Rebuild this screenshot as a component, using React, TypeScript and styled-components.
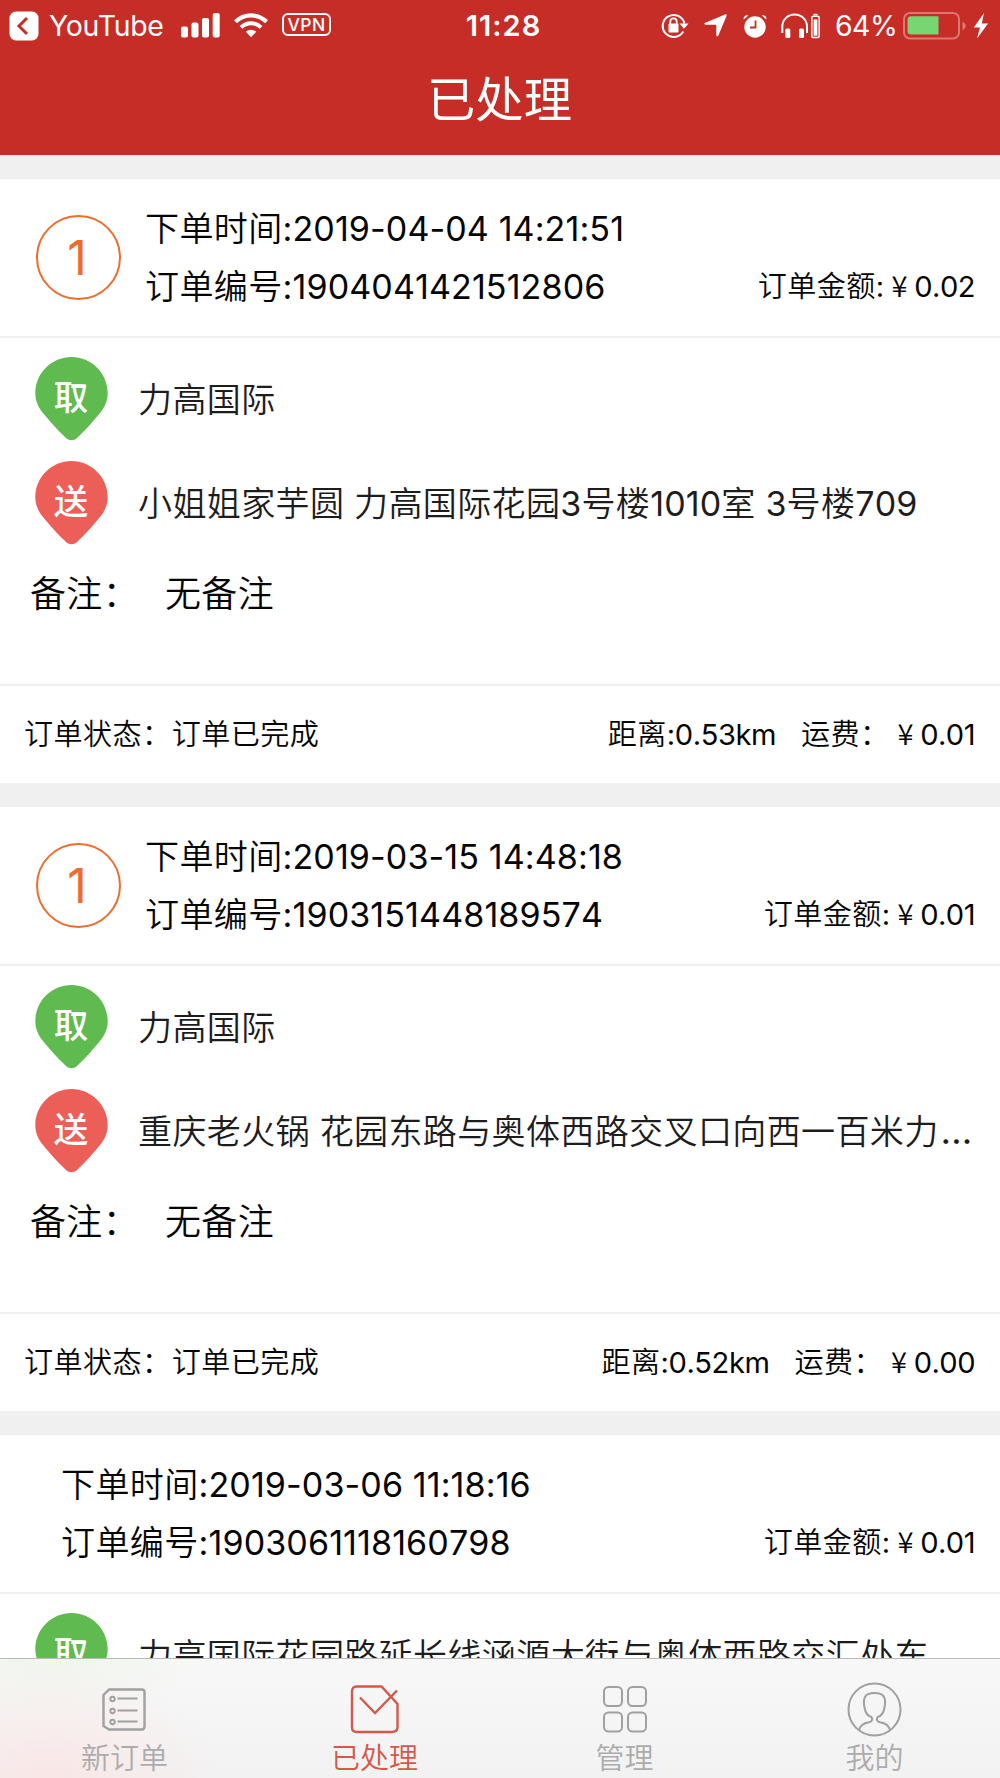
import React from 'react';
import styled, { createGlobalStyle, css } from 'styled-components';

const GlobalStyle = createGlobalStyle`
  * { box-sizing: border-box; }
  body {
    margin: 0;
    background: #fff;
    font-family: Inter, "Noto Sans CJK SC", sans-serif;
    font-weight: 400;
    font-kerning: none;
    -webkit-font-smoothing: antialiased;
  }
`;

const Screen = styled.div`
  display: flex;
  flex-direction: column;
  width: 1000px;
  height: 1778px;
  overflow: hidden;
  background: #f0f0f0;
  color: #050505;
`;

const Header = styled.header`
  flex: none;
  height: 155px;
  background: #c72d27;
  color: #fff;
`;

const StatusBar = styled.div`
  display: grid;
  grid-template-columns: 1fr auto 1fr;
  align-items: center;
  height: 50px;
  padding: 0 11px 0 9px;
  font-size: 28.4px;
`;

const StatusSide = styled.div<{ $end?: boolean }>`
  display: flex;
  align-items: center;
  justify-content: ${(p) => (p.$end ? 'flex-end' : 'flex-start')};
`;

const StatusText = styled.span<{ $width: number; $ml: number; $track: number }>`
  width: ${(p) => p.$width}px;
  margin-left: ${(p) => p.$ml}px;
  letter-spacing: ${(p) => p.$track}px;
  font-kerning: normal;
  line-height: 51px;
  white-space: nowrap;
`;

const Clock = styled.span`
  padding-left: 9px;
  font-size: 29px;
  font-weight: 600;
  letter-spacing: 1px;
  line-height: 51px;
`;

const Glyph = styled.svg<{ $ml?: number }>`
  display: block;
  flex: none;
  margin-left: ${(p) => p.$ml ?? 0}px;
`;

const VpnTag = styled.span`
  display: flex;
  align-items: center;
  justify-content: center;
  width: 49px;
  height: 23px;
  margin: -2px 0 0 14px;
  border: 2px solid #fff;
  border-radius: 6px;
  font-size: 17.5px;
  font-weight: 500;
  letter-spacing: 0.4px;
`;

const Title = styled.h1`
  margin: 0;
  padding-right: 1px;
  height: 96px;
  line-height: 99px;
  text-align: center;
  font-size: 48.3px;
  font-weight: 400;
`;

const List = styled.main`
  flex: 1;
  min-height: 0;
  overflow: hidden;
  padding-top: 24px;
`;

const Card = styled.article`
  height: 604px;
  margin-bottom: 24px;
  background: #fff;
`;

const CardHead = styled.div<{ $indent: number }>`
  display: flex;
  align-items: center;
  height: 159px;
  padding: 0 25px 0 ${(p) => p.$indent}px;
  border-bottom: 2px solid #f0f0f0;
`;

const Count = styled.div`
  display: flex;
  align-items: center;
  justify-content: center;
  flex: none;
  width: 85px;
  height: 85px;
  margin-right: 24px;
  padding-right: 3px;
  border: 2px solid #ec6d2d;
  border-radius: 50%;
  color: #ec6d2d;
  font-size: 48px;
`;

const HeadLines = styled.div`
  flex: 1;
  font-size: 34.05px;
  line-height: 58px;
`;

const HeadLine = styled.div`
  display: flex;
  justify-content: space-between;
  height: 58px;
  white-space: nowrap;
`;

const Small = styled.span`
  font-size: 29.1px;
  white-space: pre;
`;

const Latin = styled.span<{ $track: number }>`
  font-weight: 400;
  letter-spacing: ${(p) => p.$track}em;
`;

const Han = styled.span`
  font-weight: 350;
  letter-spacing: 0.01em;

  ${Small} & {
    letter-spacing: 0.015em;
  }
`;

const Yen = styled.span`
  display: inline-block;
  width: 1.05em;
  padding-left: 0.04em;
  text-align: center;
  font-family: "Noto Sans CJK SC", sans-serif;
  font-weight: 350;
  line-height: 1;
`;

const CardBody = styled.div`
  height: 346px;
  padding: 20px 26px 0 30px;
`;

const Stop = styled.div`
  display: flex;
  height: 104px;
  padding-left: 5px;
`;

const StopText = styled.div`
  flex: 1;
  min-width: 0;
  margin-left: 30px;
  font-size: 34.05px;
  line-height: 84px;
  height: 84px;
  color: #1d1d1d;
  white-space: nowrap;
  overflow: hidden;
`;

const Ellipsis = styled.span`
  margin-left: 2px;
  font-size: 1.08em;
  line-height: 1;
`;

const Remark = styled.div`
  display: flex;
  font-size: 36px;
  line-height: 56px;
`;

const RemarkLabel = styled.span`
  width: 135px;
`;

const CardFoot = styled.div`
  display: flex;
  align-items: center;
  height: 99px;
  padding: 0 25px 5px 24px;
  border-top: 2px solid #f0f0f0;
`;

const FootStatus = styled(Small)`
  flex: 1;
`;

const FootFee = styled(Small)`
  margin-left: 25px;
`;

const TabBar = styled.nav`
  flex: none;
  display: grid;
  grid-template-columns: repeat(4, 1fr);
  height: 120px;
  border-top: 1px solid #b9b9b9;
  background:
    radial-gradient(ellipse 170px 110px at 50px 118px, rgba(255, 222, 222, 0.6), rgba(250, 235, 235, 0)),
    radial-gradient(ellipse 160px 60px at 50px 0, rgba(236, 243, 230, 0.6), rgba(240, 244, 238, 0)),
    linear-gradient(#f8f8f8, #f2f2f2);
`;

const tabOn = css`
  color: #d4594c;
`;

const Tab = styled.div<{ $active?: boolean }>`
  display: flex;
  flex-direction: column;
  align-items: center;
  padding-top: 21px;
  color: #a0a0a0;
  ${(p) => p.$active && tabOn}
`;

const TabLabel = styled.span<{ $active?: boolean }>`
  margin-top: 1px;
  padding-right: 1px;
  font-size: 29px;
  font-weight: 350;
  line-height: 40px;
  color: ${(p) => (p.$active ? '#d4594c' : '#acacac')};
`;

const PinSvg = styled.svg`
  display: block;
  flex: none;
  width: 73px;
  height: 84px;
  margin-top: -1px;
`;

const PinText = styled.text`
  font-family: "Noto Sans CJK SC", sans-serif;
  font-size: 34.5px;
  font-weight: 500;
  fill: #fff;
`;

function Mixed({ text, track = 0 }: { text: string; track?: number }) {
  const runs = text.match(/[\x20-\x7e]+|¥|…|[^\x20-\x7e¥…]+/g) ?? [];
  return (
    <>
      {runs.map((run, i) => {
        if (run === '¥') return <Yen key={i}>{run}</Yen>;
        if (run === '…') return <Ellipsis key={i}>{run}</Ellipsis>;
        return /^[\x20-\x7e]/.test(run)
          ? <Latin key={i} $track={track}>{run}</Latin>
          : <Han key={i}>{run}</Han>;
      })}
    </>
  );
}

function Pin({ color, label }: { color: string; label: string }) {
  return (
    <PinSvg viewBox="0 0 73 84">
      <path
        fill={color}
        d="M36.5 0C56.5 0 72.700 16.200 72.700 36.500C72.700 44 69.500 50.500 65 56C58.500 64 51 72.500 43 80C39 84.300 34 84.300 30 80C22 72.500 14.500 64 8 56C3.500 50.500 .3 44 .3 36.500C.3 16.200 16.500 0 36.500 0Z"
      />
      <PinText x="36" y="52.500" textAnchor="middle">{label}</PinText>
    </PinSvg>
  );
}

interface Order {
  count?: number;
  time: string;
  no: string;
  amount: string;
  from: string;
  delivery?: { to: string; distance: string; fee: string };
}

const orders: Order[] = [
  {
    count: 1,
    time: '2019-04-04 14:21:51',
    no: '1904041421512806',
    amount: '0.02',
    from: '力高国际',
    delivery: {
      to: '小姐姐家芋圆 力高国际花园3号楼1010室 3号楼709',
      distance: '0.53km',
      fee: '0.01',
    },
  },
  {
    count: 1,
    time: '2019-03-15 14:48:18',
    no: '1903151448189574',
    amount: '0.01',
    from: '力高国际',
    delivery: {
      to: '重庆老火锅 花园东路与奥体西路交叉口向西一百米力…',
      distance: '0.52km',
      fee: '0.00',
    },
  },
  {
    time: '2019-03-06 11:18:16',
    no: '1903061118160798',
    amount: '0.01',
    from: '力高国际花园路延长线涵源大街与奥体西路交汇处东',
  },
];

function OrderCard({ order }: { order: Order }) {
  const { delivery } = order;
  return (
    <Card>
      <CardHead $indent={order.count ? 36 : 61}>
        {order.count && <Count>{order.count}</Count>}
        <HeadLines>
          <HeadLine>
            <span><Mixed text={`下单时间:${order.time}`} track={0.003} /></span>
          </HeadLine>
          <HeadLine>
            <span><Mixed text={`订单编号:${order.no}`} track={0.003} /></span>
            <Small><Mixed text={`订单金额:¥${order.amount}`} track={-0.018} /></Small>
          </HeadLine>
        </HeadLines>
      </CardHead>
      <CardBody>
        <Stop>
          <Pin color="#5fba50" label="取" />
          <StopText><Mixed text={order.from} /></StopText>
        </Stop>
        {delivery && (
          <>
            <Stop>
              <Pin color="#eb5f58" label="送" />
              <StopText><Mixed text={delivery.to} track={0.003} /></StopText>
            </Stop>
            <Remark>
              <RemarkLabel><Mixed text="备注：" /></RemarkLabel>
              <Mixed text="无备注" />
            </Remark>
          </>
        )}
      </CardBody>
      {delivery && (
        <CardFoot>
          <FootStatus><Mixed text="订单状态：订单已完成" /></FootStatus>
          <Small><Mixed text={`距离:${delivery.distance}`} track={-0.015} /></Small>
          <FootFee><Mixed text={`运费：¥${delivery.fee}`} track={-0.018} /></FootFee>
        </CardFoot>
      )}
    </Card>
  );
}

function StatusIcons() {
  return (
    <>
      <Glyph width="28" height="26" viewBox="0 0 28 26" fill="none">
        <path d="M22.200 18.500A11 11 0 1 1 23.400 10.500" stroke="#fff" strokeWidth="2" />
        <path d="M18.500 10.500H27.500L23 15.800Z" fill="#fff" />
        <rect x="7.500" y="10.500" width="10" height="9" rx="1" fill="#fff" />
        <path d="M9.300 11V8.500a3.200 3.200 0 0 1 6.400 0V11" stroke="#fff" strokeWidth="1.800" />
      </Glyph>
      <Glyph $ml={15} width="23" height="23" viewBox="0 0 23 23" fill="#fff">
        <path d="M21 .5C22.300 0 23 .8 22.500 2L14.400 21.400C13.900 22.700 12.400 22.700 12.300 21.200V11.600C12.300 11 12 10.700 11.400 10.700H1.500C0 10.600 0 9.200 1.300 8.800Z" />
      </Glyph>
      <Glyph $ml={16} width="24" height="24" viewBox="0 0 24 24" fill="#fff">
        <circle cx="12" cy="13" r="10.700" />
        <path d="M.8 5.500C-.3 2.500 3 .2 5.300 1.500ZM23.200 5.500C24.300 2.500 21 .2 18.700 1.500Z" />
        <path d="M12.500 6.500V13.500H7" fill="none" stroke="#c72d27" strokeWidth="1.800" />
      </Glyph>
      <Glyph $ml={14} width="40" height="26" viewBox="0 0 40 26" fill="none">
        <path d="M1.300 20V13.500C1.300 6.500 7 1.500 13.600 1.500S26 6.500 26 13.500V20" stroke="#fff" strokeWidth="2" />
        <rect x="4.300" y="15.500" width="5" height="9.500" rx="1.500" fill="#fff" />
        <rect x="18" y="15.500" width="5" height="9.500" rx="1.500" fill="#fff" />
        <rect x="30.800" y="3.200" width="7.400" height="21.300" rx="1.500" stroke="#fff" strokeWidth="1.500" />
        <rect x="32.600" y="6.500" width="3.800" height="16.200" fill="#fff" />
        <rect x="32.500" y=".8" width="4" height="1.500" fill="#fff" />
      </Glyph>
    </>
  );
}

export default function App() {
  return (
    <>
      <GlobalStyle />
      <Screen>
        <Header>
          <StatusBar>
            <StatusSide>
              <Glyph width="30" height="30" viewBox="0 0 30 30">
                <rect x=".5" y=".5" width="29" height="29" rx="6.500" fill="#fff" />
                <path d="M18 7L10 15L18 23" fill="none" stroke="#c72d27" strokeWidth="3" />
              </Glyph>
              <StatusText $width={115} $ml={10} $track={-0.25}>YouTube</StatusText>
              <Glyph $ml={17} width="39" height="25" viewBox="0 0 39 25" fill="#fff">
                <rect x="0" y="13.500" width="7" height="11" rx="2" />
                <rect x="10.500" y="9.500" width="7" height="15" rx="2" />
                <rect x="21" y="5" width="7" height="19.500" rx="2" />
                <rect x="31.700" y="0" width="7" height="24.500" rx="2" />
              </Glyph>
              <Glyph $ml={14} width="34" height="25" viewBox="0 0 34 25" fill="none">
                <path d="M1.500 8.800A22 22 0 0 1 32.500 8.800" stroke="#fff" strokeWidth="4.200" />
                <path d="M7 14.300A14.200 14.200 0 0 1 27 14.300" stroke="#fff" strokeWidth="4" />
                <path d="M11.800 18.800A7.500 7.500 0 0 1 22.200 18.800L17 24.300Z" fill="#fff" />
              </Glyph>
              <VpnTag>VPN</VpnTag>
            </StatusSide>
            <Clock>11:28</Clock>
            <StatusSide $end>
              <StatusIcons />
              <StatusText $width={62} $ml={14} $track={-0.5}>64%</StatusText>
              <Glyph $ml={6} width="64" height="28" viewBox="0 0 64 28">
                <rect x="1" y="1" width="55" height="25.500" rx="6" fill="none" stroke="#dd7772" strokeWidth="2" />
                <path d="M8 4.300H35.500V22.500H8Q4.500 22.500 4.500 19V7.800Q4.500 4.300 8 4.300Z" fill="#77d572" />
                <path d="M59.500 9.500Q62.800 11.500 62.800 14T59.500 18.500Z" fill="#dd7772" />
              </Glyph>
              <Glyph $ml={7} width="15" height="26" viewBox="0.500 0 15 26" fill="#fff">
                <path d="M10.500 0L.3 14.500H6.500L3.500 25.500L14.600 10.500H8.300Z" />
              </Glyph>
            </StatusSide>
          </StatusBar>
          <Title>已处理</Title>
        </Header>
        <List>
          {orders.map((order) => (
            <OrderCard key={order.no} order={order} />
          ))}
        </List>
        <TabBar>
          <Tab>
            <Glyph width="56" height="58" viewBox="1 0 56 58" fill="none" stroke="currentColor" strokeWidth="2.400">
              <path d="M13 9.500H45.500Q48.500 9.500 48.500 12V46Q48.500 49.500 46 49.500H13L7.500 46V15Z" strokeLinejoin="round" />
              <g strokeWidth="1.900">
                <circle cx="16.500" cy="19" r="2.200" /><circle cx="16.500" cy="31" r="2.200" /><circle cx="16.500" cy="42" r="2.200" />
                <path d="M21.500 18.500H41.500M21.500 30.500H41.500M21.500 41.500H41.500" />
              </g>
            </Glyph>
            <TabLabel>新订单</TabLabel>
          </Tab>
          <Tab $active>
            <Glyph width="56" height="58" viewBox="0 0 56 58" fill="none" stroke="currentColor" strokeWidth="2.400">
              <path d="M34.500 6.500H9.500Q5 6.500 5 11.500V47.500Q5 52 9.500 52H44.500Q50.500 52 50.500 47V24Z" />
              <path d="M13 17.500L28 33L50 10.500" />
            </Glyph>
            <TabLabel $active>已处理</TabLabel>
          </Tab>
          <Tab>
            <Glyph width="56" height="58" viewBox="0 0.500 56 58" fill="none" stroke="currentColor" strokeWidth="2">
              <rect x="7" y="7.500" width="18" height="19" rx="4.500" />
              <rect x="31" y="7.500" width="18" height="19" rx="4.500" />
              <rect x="7" y="33" width="18" height="19" rx="4.500" />
              <rect x="31" y="33" width="18" height="19" rx="4.500" />
            </Glyph>
            <TabLabel>管理</TabLabel>
          </Tab>
          <Tab>
            <Glyph width="56" height="58" viewBox="0.500 0 56 58" fill="none" stroke="currentColor" strokeWidth="2">
              <circle cx="28" cy="29.500" r="26" />
              <path d="M12.500 50.500C13.500 45 18 43 22.500 42.300C26 41.500 26 39 25 37C21 36 19 33.500 18 27.500C16 17 19 13 28 13S40 17 38 27.500C37 33.500 35 36 31 37C30 39 30 41.500 33.500 42.300C38 43 42.500 45 43.500 50.500" />
            </Glyph>
            <TabLabel>我的</TabLabel>
          </Tab>
        </TabBar>
      </Screen>
    </>
  );
}
